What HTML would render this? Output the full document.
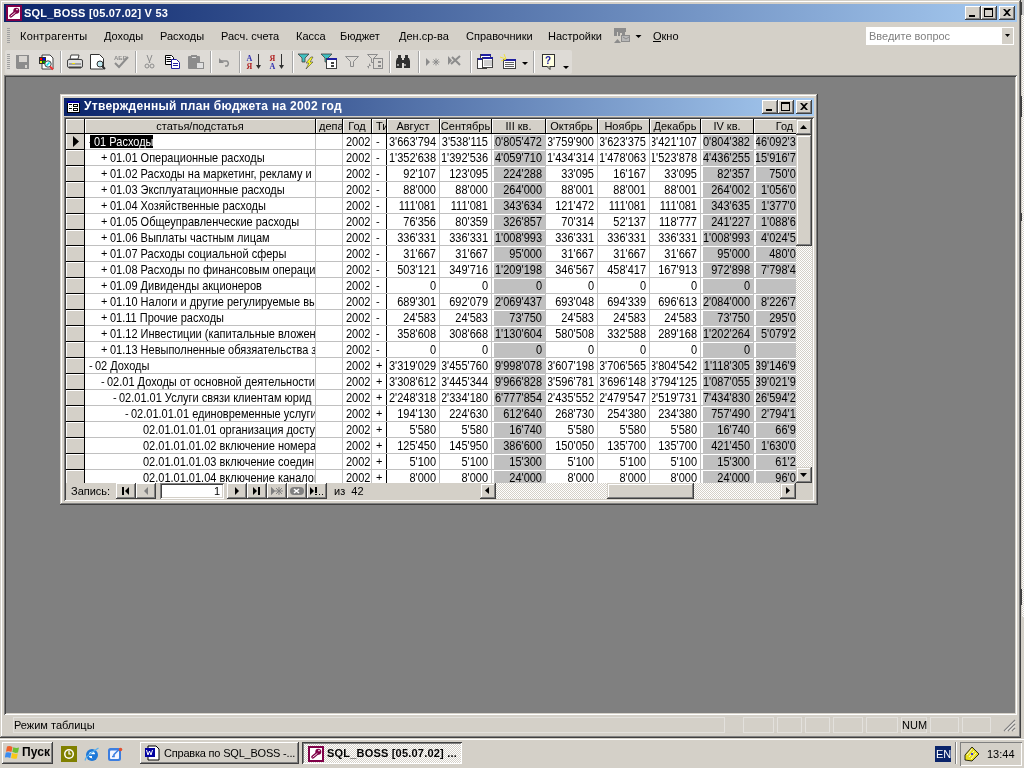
<!DOCTYPE html>
<html><head><meta charset="utf-8">
<style>
*{margin:0;padding:0;box-sizing:border-box}
html,body{width:1024px;height:768px;overflow:hidden;background:#D4D0C8;font-family:"Liberation Sans",sans-serif;font-size:11px;line-height:13px;color:#000}
.a{position:absolute}
.t{white-space:nowrap}
.chk{background-color:#fff;background-image:linear-gradient(45deg,#D4D0C8 25%,transparent 25%,transparent 75%,#D4D0C8 75%),linear-gradient(45deg,#D4D0C8 25%,transparent 25%,transparent 75%,#D4D0C8 75%);background-size:2px 2px;background-position:0 0,1px 1px}
.c{position:absolute;overflow:hidden;height:15px}
.c span{position:absolute;right:3px;top:1px;white-space:nowrap;transform:scaleY(1.12);transform-origin:0 2px}
.sy{transform:scaleY(1.12);transform-origin:0 2px}
.g{background:#C0C0C0}
</style></head><body>
<div class="a" style="left:0;top:0;width:1024px;height:768px;background:#D4D0C8;will-change:transform;overflow:hidden">

<div class="a" style="left:0px;top:0px;width:1021px;height:738px;box-shadow:inset -1px -1px #404040,inset 1px 1px #D4D0C8,inset -2px -2px #808080,inset 2px 2px #fff"></div>
<div class="a" style="left:4px;top:4px;width:1013px;height:18px;background:linear-gradient(to right,#0A246A,#A6CAF0)"></div>
<svg class="a" style="left:6px;top:5px" width="16" height="16" viewBox="0 0 16 16"><rect width="16" height="16" fill="#800048"/><rect x="2" y="2" width="12" height="12" fill="#fff"/><circle cx="10.3" cy="5.8" r="3" fill="#800048"/><path d="M9 7.5L4.8 11" stroke="#800048" stroke-width="3.2" stroke-linecap="round"/><path d="M4.6 11.2l4.8-3.8" stroke="#fff" stroke-width="0.9"/><circle cx="11" cy="4.6" r="0.8" fill="#fff"/></svg>
<div class="a t" style="left:24px;top:7px;color:#fff;font-weight:bold;letter-spacing:0.22px">SQL_BOSS [05.07.02] V 53</div>
<div class="a" style="left:965px;top:6px;width:16px;height:14px;background:#D4D0C8;box-shadow:inset -1px -1px #404040,inset 1px 1px #fff,inset -2px -2px #808080;"></div>
<div class="a" style="left:981px;top:6px;width:16px;height:14px;background:#D4D0C8;box-shadow:inset -1px -1px #404040,inset 1px 1px #fff,inset -2px -2px #808080;"></div>
<div class="a" style="left:999px;top:6px;width:16px;height:14px;background:#D4D0C8;box-shadow:inset -1px -1px #404040,inset 1px 1px #fff,inset -2px -2px #808080;"></div>
<div class="a" style="left:969px;top:15px;width:6px;height:2px;background:#000"></div>
<div class="a" style="left:984px;top:8px;width:9px;height:9px;border:1px solid #000;border-top-width:2px"></div>
<svg class="a" style="left:1003px;top:9px" width="8" height="7" viewBox="0 0 8 7"><path d="M0 0h2l2 2 2-2h2v0L5 3.5 8 7H6L4 5 2 7H0L3 3.5z" fill="#000"/></svg>
<div class="a" style="left:7px;top:28px;width:3px;height:1px;background:#A0A0A0"></div>
<div class="a" style="left:7px;top:30px;width:3px;height:1px;background:#A0A0A0"></div>
<div class="a" style="left:7px;top:32px;width:3px;height:1px;background:#A0A0A0"></div>
<div class="a" style="left:7px;top:34px;width:3px;height:1px;background:#A0A0A0"></div>
<div class="a" style="left:7px;top:36px;width:3px;height:1px;background:#A0A0A0"></div>
<div class="a" style="left:7px;top:38px;width:3px;height:1px;background:#A0A0A0"></div>
<div class="a" style="left:7px;top:40px;width:3px;height:1px;background:#A0A0A0"></div>
<div class="a" style="left:7px;top:42px;width:3px;height:1px;background:#A0A0A0"></div>
<div class="a t" style="left:20px;top:30px;"><span style="letter-spacing:0.25px">Контрагенты</span></div>
<div class="a t" style="left:104px;top:30px;">Доходы</div>
<div class="a t" style="left:160px;top:30px;">Расходы</div>
<div class="a t" style="left:221px;top:30px;">Расч. счета</div>
<div class="a t" style="left:296px;top:30px;">Касса</div>
<div class="a t" style="left:340px;top:30px;">Бюджет</div>
<div class="a t" style="left:399px;top:30px;">Ден.ср-ва</div>
<div class="a t" style="left:466px;top:30px;">Справочники</div>
<div class="a t" style="left:548px;top:30px;">Настройки</div>
<div class="a t" style="left:653px;top:30px;">Окно</div>
<svg class="a" style="left:614px;top:27px" width="28" height="18" viewBox="0 0 28 18"><path d="M0 1h12v4h-1v4H8V6H6v3H4V5H3v4H0z" fill="#8C8C8C"/><rect x="7.5" y="8.5" width="8" height="6" fill="#B8B8B8" stroke="#8C8C8C"/><path d="M9 10l3 2 3-2" stroke="#8C8C8C" fill="none"/><path d="M0 16l3.5-4 3.5 4z" fill="#8C8C8C"/><path d="M21.5 8h6l-3 3z" fill="#000"/></svg>
<div class="a" style="left:653px;top:41px;width:8px;height:1px;background:#000"></div>
<div class="a" style="left:866px;top:27px;width:148px;height:18px;background:#fff;border:1px solid #fff"></div>
<div class="a t" style="left:869px;top:30px;color:#808080">Введите вопрос</div>
<div class="a" style="left:1002px;top:28px;width:11px;height:16px;background:#D4D0C8"></div>
<svg class="a" style="left:1005px;top:34px" width="5" height="3"><path d="M0 0h5L2.5 3z" fill="#000"/></svg>
<div class="a" style="left:5px;top:50px;width:567px;height:24px;background:#DEDBD6;border-radius:2px"></div>
<div class="a" style="left:7px;top:54px;width:3px;height:1px;background:#A0A0A0"></div>
<div class="a" style="left:7px;top:56px;width:3px;height:1px;background:#A0A0A0"></div>
<div class="a" style="left:7px;top:58px;width:3px;height:1px;background:#A0A0A0"></div>
<div class="a" style="left:7px;top:60px;width:3px;height:1px;background:#A0A0A0"></div>
<div class="a" style="left:7px;top:62px;width:3px;height:1px;background:#A0A0A0"></div>
<div class="a" style="left:7px;top:64px;width:3px;height:1px;background:#A0A0A0"></div>
<div class="a" style="left:7px;top:66px;width:3px;height:1px;background:#A0A0A0"></div>
<div class="a" style="left:7px;top:68px;width:3px;height:1px;background:#A0A0A0"></div>
<div class="a" style="left:60px;top:51px;width:1px;height:22px;background:#A6A6A6"></div>
<div class="a" style="left:61px;top:51px;width:1px;height:22px;background:#fff"></div>
<div class="a" style="left:135px;top:51px;width:1px;height:22px;background:#A6A6A6"></div>
<div class="a" style="left:136px;top:51px;width:1px;height:22px;background:#fff"></div>
<div class="a" style="left:210px;top:51px;width:1px;height:22px;background:#A6A6A6"></div>
<div class="a" style="left:211px;top:51px;width:1px;height:22px;background:#fff"></div>
<div class="a" style="left:239px;top:51px;width:1px;height:22px;background:#A6A6A6"></div>
<div class="a" style="left:240px;top:51px;width:1px;height:22px;background:#fff"></div>
<div class="a" style="left:292px;top:51px;width:1px;height:22px;background:#A6A6A6"></div>
<div class="a" style="left:293px;top:51px;width:1px;height:22px;background:#fff"></div>
<div class="a" style="left:389px;top:51px;width:1px;height:22px;background:#A6A6A6"></div>
<div class="a" style="left:390px;top:51px;width:1px;height:22px;background:#fff"></div>
<div class="a" style="left:418px;top:51px;width:1px;height:22px;background:#A6A6A6"></div>
<div class="a" style="left:419px;top:51px;width:1px;height:22px;background:#fff"></div>
<div class="a" style="left:470px;top:51px;width:1px;height:22px;background:#A6A6A6"></div>
<div class="a" style="left:471px;top:51px;width:1px;height:22px;background:#fff"></div>
<div class="a" style="left:533px;top:51px;width:1px;height:22px;background:#A6A6A6"></div>
<div class="a" style="left:534px;top:51px;width:1px;height:22px;background:#fff"></div>
<svg class="a" style="left:0;top:50px" width="580" height="24" viewBox="0 50 580 24"><path d="M16 55h13v14H17l-1-1z" fill="#8C8C8C"/><rect x="19" y="56" width="8" height="6" fill="#D8D5D0"/><rect x="25" y="65" width="2" height="3" fill="#D8D5D0"/><path d="M42 55h8l3 3v11H42z" fill="#fff" stroke="#404040" stroke-width="1"/><rect x="39" y="57" width="7" height="7" fill="#303030"/><rect x="40" y="58" width="2" height="2" fill="#f00"/><rect x="43" y="58" width="2" height="2" fill="#00f"/><rect x="40" y="61" width="2" height="2" fill="#ee0"/><rect x="43" y="61" width="2" height="2" fill="#0a0"/><circle cx="48" cy="64" r="3.2" fill="#E0FFFF" stroke="#404040"/><path d="M46.5 65.5l3-3" stroke="#00E0F0" stroke-width="1.5"/><path d="M50 66.5l3 3" stroke="#f03030" stroke-width="2"/><path d="M71 55h8l-1 4h-8z" fill="#fff" stroke="#404040"/><rect x="67.5" y="59.5" width="15" height="8" rx="1.5" fill="#E0E0E0" stroke="#404040"/><rect x="69" y="63" width="12" height="2" fill="#A0A0A0"/><rect x="72" y="63" width="3" height="1" fill="#f0e000"/><rect x="69" y="66.5" width="12" height="2" fill="#404040"/><path d="M90.5 54.5h9l4 4v10.5h-13z" fill="#fff" stroke="#303030"/><circle cx="100" cy="64" r="3" fill="#C0E8F0" stroke="#303030"/><path d="M102 66l3 3" stroke="#303030" stroke-width="2"/><text x="114" y="60" font-size="6" font-family="Liberation Sans" font-weight="bold" fill="#8C8C8C">АБВ</text><path d="M115 63l4 4 9-10" stroke="#8C8C8C" stroke-width="2" fill="none"/><path d="M147 55l3 8M152 55l-3 8" stroke="#8C8C8C" stroke-width="1"/><circle cx="147" cy="66" r="2" fill="none" stroke="#8C8C8C"/><circle cx="152" cy="66" r="2" fill="none" stroke="#8C8C8C"/><path d="M165.5 55.5h6l2 2v7h-8z" fill="#fff" stroke="#000"/><path d="M166.5 57.5h4M166.5 59.5h5M166.5 61.5h5" stroke="#000"/><path d="M171.5 59.5h5l3 3v6h-8z" fill="#fff" stroke="#2020A0"/><path d="M173 63.5h5M173 65.5h5" stroke="#2020A0"/><rect x="188" y="56" width="12" height="13" rx="1" fill="#8C8C8C"/><rect x="191" y="55" width="6" height="3" fill="#8C8C8C"/><rect x="192" y="57" width="4" height="1" fill="#ddd"/><rect x="196.5" y="62.5" width="7" height="6" fill="#E0E0E0" stroke="#8C8C8C"/><path d="M221 61h6a3 3 0 0 1 0 5h-2" stroke="#8C8C8C" stroke-width="1.5" fill="none"/><path d="M219 58v5h5z" fill="#8C8C8C"/><text x="246.5" y="60.5" font-size="8" font-family="Liberation Serif" font-weight="bold" fill="#3030B0">A</text><text x="246.5" y="68.5" font-size="8" font-family="Liberation Serif" font-weight="bold" fill="#B02020">Я</text><path d="M258.5 54v13" stroke="#303030"/><path d="M256 65h5l-2.5 4z" fill="#303030"/><text x="269.5" y="60.5" font-size="8" font-family="Liberation Serif" font-weight="bold" fill="#B02020">Я</text><text x="269.5" y="68.5" font-size="8" font-family="Liberation Serif" font-weight="bold" fill="#3030B0">A</text><path d="M281.5 54v13" stroke="#303030"/><path d="M279 65h5l-2.5 4z" fill="#303030"/><path d="M298 54h11l-4 4v4h-3v-4z" fill="#40C0C0" stroke="#404040" stroke-width="0.8"/><path d="M311 57l-5 6h3l-3 6 7-7h-3l3-5z" fill="#FFFF20" stroke="#404040" stroke-width="0.6"/><path d="M321 54h11l-4 4v4h-3v-4z" fill="#40C0C0" stroke="#404040" stroke-width="0.8"/><rect x="326.5" y="58.5" width="10" height="10" fill="#fff" stroke="#404040"/><rect x="327" y="58" width="10" height="2" fill="#2020A0"/><rect x="331" y="62" width="3" height="2" fill="#404040"/><rect x="331" y="65" width="3" height="2" fill="#404040"/><path d="M345.5 56.5h13l-5 5v5h-3v-5z" fill="none" stroke="#8C8C8C"/><path d="M367.5 54.5h10l-4 4v4h-2v-4z" fill="none" stroke="#8C8C8C"/><rect x="373.5" y="58.5" width="9" height="10" fill="none" stroke="#8C8C8C"/><rect x="378" y="61" width="3" height="2" fill="#8C8C8C"/><rect x="378" y="65" width="3" height="2" fill="#8C8C8C"/><path d="M367 66h4l-2-3v6z" fill="#8C8C8C"/><path d="M397 58h5v10h-6v-7zM404 58h5l1 3v7h-6z" fill="#303030"/><rect x="398" y="55" width="3" height="3" fill="#303030"/><rect x="405" y="55" width="3" height="3" fill="#303030"/><rect x="402" y="60" width="2" height="3" fill="#303030"/><rect x="397.5" y="64" width="1" height="2" fill="#fff"/><rect x="404.5" y="64" width="1" height="2" fill="#fff"/><path d="M426 58v8l4-4z" fill="#8C8C8C"/><path d="M436 58.5v7M432.5 62h7M433.5 59.5l5 5M438.5 59.5l-5 5" stroke="#8C8C8C"/><path d="M448 56v9l4-4.5z" fill="#8C8C8C"/><path d="M451 64l9-8M452 57l8 8" stroke="#8C8C8C" stroke-width="2"/><rect x="480.5" y="54.5" width="10" height="9" fill="#fff" stroke="#404040"/><rect x="481" y="54" width="10" height="2" fill="#2020A0"/><rect x="477.5" y="58.5" width="9" height="10" fill="#fff" stroke="#404040"/><rect x="478" y="58" width="9" height="2" fill="#2020A0"/><rect x="482.5" y="57.5" width="10" height="10" fill="#fff" stroke="#404040"/><rect x="483" y="57" width="10" height="2" fill="#2020A0"/><path d="M484 61h8M484 63h8M484 65h8" stroke="#A0A0A0"/><rect x="503.5" y="59.5" width="12" height="9" fill="#fff" stroke="#404040"/><rect x="504" y="59" width="12" height="2" fill="#2020A0"/><path d="M505 62.5h9M505 64.5h9M505 66.5h9" stroke="#606060"/><path d="M500 57l6 2M504 54l2 5M501 61l5-2" stroke="#F0E040" stroke-width="1"/><path d="M522 62h6l-3 3z" fill="#000"/><rect x="542.5" y="54.5" width="12" height="12" fill="#FFFFE0" stroke="#303030"/><path d="M547 66.5l3 3v-3" fill="#FFFFE0" stroke="#303030"/><text x="545" y="64" font-size="10" font-weight="bold" font-family="Liberation Sans" fill="#2020A0">?</text><path d="M563 66h6l-3 3z" fill="#000"/></svg>
<div class="a" style="left:4px;top:75px;width:1013px;height:640px;background:#808080;box-shadow:inset 1px 1px #808080,inset -1px -1px #fff,inset 2px 2px #404040,inset -2px -2px #D4D0C8"></div>
<div class="a" style="left:60px;top:94px;width:758px;height:411px;background:#D4D0C8;box-shadow:inset -1px -1px #404040,inset 1px 1px #D4D0C8,inset -2px -2px #808080,inset 2px 2px #fff"></div>
<div class="a" style="left:64px;top:98px;width:750px;height:18px;background:linear-gradient(to right,#0A246A,#A6CAF0)"></div>
<svg class="a" style="left:67px;top:101px" width="13" height="12" viewBox="0 0 13 12" shape-rendering="crispEdges"><rect width="13" height="2" fill="#0000A0"/><rect y="2" width="13" height="10" fill="#000"/><rect x="1" y="2" width="11" height="9" fill="#fff"/><rect x="2" y="3" width="3" height="1" fill="#000"/><rect x="2" y="7" width="3" height="1" fill="#000"/><rect x="2" y="5" width="1" height="1" fill="#bbb"/><rect x="4" y="5" width="1" height="1" fill="#bbb"/><rect x="2" y="9" width="1" height="1" fill="#bbb"/><rect x="4" y="9" width="1" height="1" fill="#bbb"/><rect x="6" y="3" width="5" height="3" fill="#000"/><rect x="7" y="4" width="3" height="1" fill="#fff"/><rect x="6" y="7" width="5" height="3" fill="#000"/><rect x="7" y="8" width="3" height="1" fill="#fff"/></svg>
<div class="a t" style="left:84px;top:100px;color:#fff;font-weight:bold;font-size:12px;letter-spacing:0.28px">Утвержденный план бюджета на 2002 год</div>
<div class="a" style="left:762px;top:100px;width:16px;height:14px;background:#D4D0C8;box-shadow:inset -1px -1px #404040,inset 1px 1px #fff,inset -2px -2px #808080;"></div>
<div class="a" style="left:778px;top:100px;width:16px;height:14px;background:#D4D0C8;box-shadow:inset -1px -1px #404040,inset 1px 1px #fff,inset -2px -2px #808080;"></div>
<div class="a" style="left:796px;top:100px;width:16px;height:14px;background:#D4D0C8;box-shadow:inset -1px -1px #404040,inset 1px 1px #fff,inset -2px -2px #808080;"></div>
<div class="a" style="left:766px;top:109px;width:6px;height:2px;background:#000"></div>
<div class="a" style="left:781px;top:102px;width:9px;height:9px;border:1px solid #000;border-top-width:2px"></div>
<svg class="a" style="left:800px;top:103px" width="8" height="7" viewBox="0 0 8 7"><path d="M0 0h2l2 2 2-2h2v0L5 3.5 8 7H6L4 5 2 7H0L3 3.5z" fill="#000"/></svg>
<div class="a" style="left:64px;top:117px;width:750px;height:384px;box-shadow:inset 1px 1px #808080,inset -1px -1px #fff,inset 2px 2px #404040,inset -2px -2px #D4D0C8"></div>
<div class="a" style="left:66px;top:119px;width:730px;height:364px;overflow:hidden;background:#fff">
<div class="a" style="left:0;top:0;width:18px;height:364px;background:#D4D0C8"></div>
<div class="a" style="left:249px;top:15px;width:1px;height:349px;background:#C0C0C0"></div>
<div class="a" style="left:276px;top:15px;width:1px;height:349px;background:#C0C0C0"></div>
<div class="a" style="left:305px;top:15px;width:1px;height:349px;background:#C0C0C0"></div>
<div class="a" style="left:320px;top:15px;width:1px;height:349px;background:#000"></div>
<div class="a" style="left:373px;top:15px;width:1px;height:349px;background:#C0C0C0"></div>
<div class="a" style="left:425px;top:15px;width:1px;height:349px;background:#C0C0C0"></div>
<div class="a" style="left:479px;top:15px;width:1px;height:349px;background:#C0C0C0"></div>
<div class="a" style="left:531px;top:15px;width:1px;height:349px;background:#C0C0C0"></div>
<div class="a" style="left:583px;top:15px;width:1px;height:349px;background:#C0C0C0"></div>
<div class="a" style="left:634px;top:15px;width:1px;height:349px;background:#C0C0C0"></div>
<div class="a" style="left:687px;top:15px;width:1px;height:349px;background:#C0C0C0"></div>
<div class="a" style="left:18px;top:0;width:1px;height:364px;background:#000"></div>
<div class="a" style="left:19px;top:30px;width:730px;height:1px;background:#C0C0C0"></div>
<div class="a" style="left:0;top:30px;width:18px;height:1px;background:#000"></div>
<div class="a" style="left:0;top:31px;width:18px;height:1px;background:#fff"></div>
<div class="a" style="left:0;top:15px;width:1px;height:15px;background:#fff"></div>
<div class="a" style="left:19px;top:46px;width:730px;height:1px;background:#C0C0C0"></div>
<div class="a" style="left:0;top:46px;width:18px;height:1px;background:#000"></div>
<div class="a" style="left:0;top:47px;width:18px;height:1px;background:#fff"></div>
<div class="a" style="left:0;top:31px;width:1px;height:15px;background:#fff"></div>
<div class="a" style="left:19px;top:62px;width:730px;height:1px;background:#C0C0C0"></div>
<div class="a" style="left:0;top:62px;width:18px;height:1px;background:#000"></div>
<div class="a" style="left:0;top:63px;width:18px;height:1px;background:#fff"></div>
<div class="a" style="left:0;top:47px;width:1px;height:15px;background:#fff"></div>
<div class="a" style="left:19px;top:78px;width:730px;height:1px;background:#C0C0C0"></div>
<div class="a" style="left:0;top:78px;width:18px;height:1px;background:#000"></div>
<div class="a" style="left:0;top:79px;width:18px;height:1px;background:#fff"></div>
<div class="a" style="left:0;top:63px;width:1px;height:15px;background:#fff"></div>
<div class="a" style="left:19px;top:94px;width:730px;height:1px;background:#C0C0C0"></div>
<div class="a" style="left:0;top:94px;width:18px;height:1px;background:#000"></div>
<div class="a" style="left:0;top:95px;width:18px;height:1px;background:#fff"></div>
<div class="a" style="left:0;top:79px;width:1px;height:15px;background:#fff"></div>
<div class="a" style="left:19px;top:110px;width:730px;height:1px;background:#C0C0C0"></div>
<div class="a" style="left:0;top:110px;width:18px;height:1px;background:#000"></div>
<div class="a" style="left:0;top:111px;width:18px;height:1px;background:#fff"></div>
<div class="a" style="left:0;top:95px;width:1px;height:15px;background:#fff"></div>
<div class="a" style="left:19px;top:126px;width:730px;height:1px;background:#C0C0C0"></div>
<div class="a" style="left:0;top:126px;width:18px;height:1px;background:#000"></div>
<div class="a" style="left:0;top:127px;width:18px;height:1px;background:#fff"></div>
<div class="a" style="left:0;top:111px;width:1px;height:15px;background:#fff"></div>
<div class="a" style="left:19px;top:142px;width:730px;height:1px;background:#C0C0C0"></div>
<div class="a" style="left:0;top:142px;width:18px;height:1px;background:#000"></div>
<div class="a" style="left:0;top:143px;width:18px;height:1px;background:#fff"></div>
<div class="a" style="left:0;top:127px;width:1px;height:15px;background:#fff"></div>
<div class="a" style="left:19px;top:158px;width:730px;height:1px;background:#C0C0C0"></div>
<div class="a" style="left:0;top:158px;width:18px;height:1px;background:#000"></div>
<div class="a" style="left:0;top:159px;width:18px;height:1px;background:#fff"></div>
<div class="a" style="left:0;top:143px;width:1px;height:15px;background:#fff"></div>
<div class="a" style="left:19px;top:174px;width:730px;height:1px;background:#C0C0C0"></div>
<div class="a" style="left:0;top:174px;width:18px;height:1px;background:#000"></div>
<div class="a" style="left:0;top:175px;width:18px;height:1px;background:#fff"></div>
<div class="a" style="left:0;top:159px;width:1px;height:15px;background:#fff"></div>
<div class="a" style="left:19px;top:190px;width:730px;height:1px;background:#C0C0C0"></div>
<div class="a" style="left:0;top:190px;width:18px;height:1px;background:#000"></div>
<div class="a" style="left:0;top:191px;width:18px;height:1px;background:#fff"></div>
<div class="a" style="left:0;top:175px;width:1px;height:15px;background:#fff"></div>
<div class="a" style="left:19px;top:206px;width:730px;height:1px;background:#C0C0C0"></div>
<div class="a" style="left:0;top:206px;width:18px;height:1px;background:#000"></div>
<div class="a" style="left:0;top:207px;width:18px;height:1px;background:#fff"></div>
<div class="a" style="left:0;top:191px;width:1px;height:15px;background:#fff"></div>
<div class="a" style="left:19px;top:222px;width:730px;height:1px;background:#C0C0C0"></div>
<div class="a" style="left:0;top:222px;width:18px;height:1px;background:#000"></div>
<div class="a" style="left:0;top:223px;width:18px;height:1px;background:#fff"></div>
<div class="a" style="left:0;top:207px;width:1px;height:15px;background:#fff"></div>
<div class="a" style="left:19px;top:238px;width:730px;height:1px;background:#C0C0C0"></div>
<div class="a" style="left:0;top:238px;width:18px;height:1px;background:#000"></div>
<div class="a" style="left:0;top:239px;width:18px;height:1px;background:#fff"></div>
<div class="a" style="left:0;top:223px;width:1px;height:15px;background:#fff"></div>
<div class="a" style="left:19px;top:254px;width:730px;height:1px;background:#C0C0C0"></div>
<div class="a" style="left:0;top:254px;width:18px;height:1px;background:#000"></div>
<div class="a" style="left:0;top:255px;width:18px;height:1px;background:#fff"></div>
<div class="a" style="left:0;top:239px;width:1px;height:15px;background:#fff"></div>
<div class="a" style="left:19px;top:270px;width:730px;height:1px;background:#C0C0C0"></div>
<div class="a" style="left:0;top:270px;width:18px;height:1px;background:#000"></div>
<div class="a" style="left:0;top:271px;width:18px;height:1px;background:#fff"></div>
<div class="a" style="left:0;top:255px;width:1px;height:15px;background:#fff"></div>
<div class="a" style="left:19px;top:286px;width:730px;height:1px;background:#C0C0C0"></div>
<div class="a" style="left:0;top:286px;width:18px;height:1px;background:#000"></div>
<div class="a" style="left:0;top:287px;width:18px;height:1px;background:#fff"></div>
<div class="a" style="left:0;top:271px;width:1px;height:15px;background:#fff"></div>
<div class="a" style="left:19px;top:302px;width:730px;height:1px;background:#C0C0C0"></div>
<div class="a" style="left:0;top:302px;width:18px;height:1px;background:#000"></div>
<div class="a" style="left:0;top:303px;width:18px;height:1px;background:#fff"></div>
<div class="a" style="left:0;top:287px;width:1px;height:15px;background:#fff"></div>
<div class="a" style="left:19px;top:318px;width:730px;height:1px;background:#C0C0C0"></div>
<div class="a" style="left:0;top:318px;width:18px;height:1px;background:#000"></div>
<div class="a" style="left:0;top:319px;width:18px;height:1px;background:#fff"></div>
<div class="a" style="left:0;top:303px;width:1px;height:15px;background:#fff"></div>
<div class="a" style="left:19px;top:334px;width:730px;height:1px;background:#C0C0C0"></div>
<div class="a" style="left:0;top:334px;width:18px;height:1px;background:#000"></div>
<div class="a" style="left:0;top:335px;width:18px;height:1px;background:#fff"></div>
<div class="a" style="left:0;top:319px;width:1px;height:15px;background:#fff"></div>
<div class="a" style="left:19px;top:350px;width:730px;height:1px;background:#C0C0C0"></div>
<div class="a" style="left:0;top:350px;width:18px;height:1px;background:#000"></div>
<div class="a" style="left:0;top:351px;width:18px;height:1px;background:#fff"></div>
<div class="a" style="left:0;top:335px;width:1px;height:15px;background:#fff"></div>
<div class="a" style="left:19px;top:366px;width:730px;height:1px;background:#C0C0C0"></div>
<div class="a" style="left:0;top:366px;width:18px;height:1px;background:#000"></div>
<div class="a" style="left:0;top:367px;width:18px;height:1px;background:#fff"></div>
<div class="a" style="left:0;top:351px;width:1px;height:15px;background:#fff"></div>
<svg class="a" style="left:7px;top:17px" width="7" height="11"><path d="M0 0L6 5.5 0 11z" fill="#000"/></svg>
<div class="a" style="left:0;top:14px;width:730px;height:1px;background:#000"></div>
<div class="a" style="left:0px;top:0;width:18px;height:14px;background:#D4D0C8;box-shadow:inset 1px 1px #fff;overflow:hidden"></div>
<div class="a" style="left:19px;top:0;width:230px;height:14px;background:#D4D0C8;box-shadow:inset 1px 1px #fff;overflow:hidden"><div class="a t" style="left:0;width:230px;top:1px;text-align:center">статья/подстатья</div></div>
<div class="a" style="left:249px;top:0;width:1px;height:15px;background:#000"></div>
<div class="a" style="left:250px;top:0;width:26px;height:14px;background:#D4D0C8;box-shadow:inset 1px 1px #fff;overflow:hidden"><div class="a t" style="left:3px;top:1px">департамент</div></div>
<div class="a" style="left:276px;top:0;width:1px;height:15px;background:#000"></div>
<div class="a" style="left:277px;top:0;width:28px;height:14px;background:#D4D0C8;box-shadow:inset 1px 1px #fff;overflow:hidden"><div class="a t" style="left:0;width:28px;top:1px;text-align:center">Год</div></div>
<div class="a" style="left:305px;top:0;width:1px;height:15px;background:#000"></div>
<div class="a" style="left:306px;top:0;width:14px;height:14px;background:#D4D0C8;box-shadow:inset 1px 1px #fff;overflow:hidden"><div class="a t" style="left:4px;top:1px">Тип</div></div>
<div class="a" style="left:320px;top:0;width:1px;height:15px;background:#000"></div>
<div class="a" style="left:321px;top:0;width:52px;height:14px;background:#D4D0C8;box-shadow:inset 1px 1px #fff;overflow:hidden"><div class="a t" style="left:0;width:52px;top:1px;text-align:center">Август</div></div>
<div class="a" style="left:373px;top:0;width:1px;height:15px;background:#000"></div>
<div class="a" style="left:374px;top:0;width:51px;height:14px;background:#D4D0C8;box-shadow:inset 1px 1px #fff;overflow:hidden"><div class="a t" style="left:0;width:51px;top:1px;text-align:center">Сентябрь</div></div>
<div class="a" style="left:425px;top:0;width:1px;height:15px;background:#000"></div>
<div class="a" style="left:426px;top:0;width:53px;height:14px;background:#D4D0C8;box-shadow:inset 1px 1px #fff;overflow:hidden"><div class="a t" style="left:0;width:53px;top:1px;text-align:center">III кв.</div></div>
<div class="a" style="left:479px;top:0;width:1px;height:15px;background:#000"></div>
<div class="a" style="left:480px;top:0;width:51px;height:14px;background:#D4D0C8;box-shadow:inset 1px 1px #fff;overflow:hidden"><div class="a t" style="left:0;width:51px;top:1px;text-align:center">Октябрь</div></div>
<div class="a" style="left:531px;top:0;width:1px;height:15px;background:#000"></div>
<div class="a" style="left:532px;top:0;width:51px;height:14px;background:#D4D0C8;box-shadow:inset 1px 1px #fff;overflow:hidden"><div class="a t" style="left:0;width:51px;top:1px;text-align:center">Ноябрь</div></div>
<div class="a" style="left:583px;top:0;width:1px;height:15px;background:#000"></div>
<div class="a" style="left:584px;top:0;width:50px;height:14px;background:#D4D0C8;box-shadow:inset 1px 1px #fff;overflow:hidden"><div class="a t" style="left:0;width:50px;top:1px;text-align:center">Декабрь</div></div>
<div class="a" style="left:634px;top:0;width:1px;height:15px;background:#000"></div>
<div class="a" style="left:635px;top:0;width:52px;height:14px;background:#D4D0C8;box-shadow:inset 1px 1px #fff;overflow:hidden"><div class="a t" style="left:0;width:52px;top:1px;text-align:center">IV кв.</div></div>
<div class="a" style="left:687px;top:0;width:1px;height:15px;background:#000"></div>
<div class="a" style="left:688px;top:0;width:61px;height:14px;background:#D4D0C8;box-shadow:inset 1px 1px #fff;overflow:hidden"><div class="a t" style="left:0;width:61px;top:1px;text-align:center">Год</div></div>
<div class="a" style="left:749px;top:0;width:1px;height:15px;background:#000"></div>
<div class="a" style="left:24px;top:16px;width:63px;height:13px;background:#000"></div>
<div class="a" style="left:23px;top:23px;width:1px;height:1px;background:#808080"></div>
<div class="a t sy" style="left:28px;top:16px;color:#fff">01 Расходы</div>
<div class="a t sy" style="left:280px;top:16px">2002</div>
<div class="a t" style="left:310px;top:16px">-</div>
<div class="c" style="left:323px;top:15px;width:50px"><span>3'663'794</span></div>
<div class="c" style="left:376px;top:15px;width:49px"><span>3'538'115</span></div>
<div class="a g" style="left:428px;top:16px;width:51px;height:15px"></div>
<div class="c" style="left:428px;top:15px;width:51px"><span>10'805'472</span></div>
<div class="c" style="left:482px;top:15px;width:49px"><span>13'759'900</span></div>
<div class="c" style="left:534px;top:15px;width:49px"><span>13'623'375</span></div>
<div class="c" style="left:586px;top:15px;width:48px"><span>13'421'107</span></div>
<div class="a g" style="left:637px;top:16px;width:50px;height:15px"></div>
<div class="c" style="left:637px;top:15px;width:50px"><span>10'804'382</span></div>
<div class="a g" style="left:690px;top:16px;width:55px;height:15px"></div>
<div class="c" style="left:690px;top:15px;width:55px"><span>46'092'300</span></div>
<div class="a t" style="left:35px;top:32px">+</div>
<div class="a" style="left:19px;top:31px;width:230px;height:15px;overflow:hidden"><div class="a t sy" style="left:25px;top:1px">01.01 Операционные расходы</div></div>
<div class="a t sy" style="left:280px;top:32px">2002</div>
<div class="a t" style="left:310px;top:32px">-</div>
<div class="c" style="left:323px;top:31px;width:50px"><span>1'352'638</span></div>
<div class="c" style="left:376px;top:31px;width:49px"><span>1'392'536</span></div>
<div class="a g" style="left:428px;top:32px;width:51px;height:15px"></div>
<div class="c" style="left:428px;top:31px;width:51px"><span>4'059'710</span></div>
<div class="c" style="left:482px;top:31px;width:49px"><span>1'434'314</span></div>
<div class="c" style="left:534px;top:31px;width:49px"><span>1'478'063</span></div>
<div class="c" style="left:586px;top:31px;width:48px"><span>1'523'878</span></div>
<div class="a g" style="left:637px;top:32px;width:50px;height:15px"></div>
<div class="c" style="left:637px;top:31px;width:50px"><span>4'436'255</span></div>
<div class="a g" style="left:690px;top:32px;width:55px;height:15px"></div>
<div class="c" style="left:690px;top:31px;width:55px"><span>15'916'700</span></div>
<div class="a t" style="left:35px;top:48px">+</div>
<div class="a" style="left:19px;top:47px;width:230px;height:15px;overflow:hidden"><div class="a t sy" style="left:25px;top:1px">01.02 Расходы на маркетинг, рекламу и</div></div>
<div class="a t sy" style="left:280px;top:48px">2002</div>
<div class="a t" style="left:310px;top:48px">-</div>
<div class="c" style="left:323px;top:47px;width:50px"><span>92'107</span></div>
<div class="c" style="left:376px;top:47px;width:49px"><span>123'095</span></div>
<div class="a g" style="left:428px;top:48px;width:51px;height:15px"></div>
<div class="c" style="left:428px;top:47px;width:51px"><span>224'288</span></div>
<div class="c" style="left:482px;top:47px;width:49px"><span>33'095</span></div>
<div class="c" style="left:534px;top:47px;width:49px"><span>16'167</span></div>
<div class="c" style="left:586px;top:47px;width:48px"><span>33'095</span></div>
<div class="a g" style="left:637px;top:48px;width:50px;height:15px"></div>
<div class="c" style="left:637px;top:47px;width:50px"><span>82'357</span></div>
<div class="a g" style="left:690px;top:48px;width:55px;height:15px"></div>
<div class="c" style="left:690px;top:47px;width:55px"><span>750'000</span></div>
<div class="a t" style="left:35px;top:64px">+</div>
<div class="a" style="left:19px;top:63px;width:230px;height:15px;overflow:hidden"><div class="a t sy" style="left:25px;top:1px">01.03 Эксплуатационные расходы</div></div>
<div class="a t sy" style="left:280px;top:64px">2002</div>
<div class="a t" style="left:310px;top:64px">-</div>
<div class="c" style="left:323px;top:63px;width:50px"><span>88'000</span></div>
<div class="c" style="left:376px;top:63px;width:49px"><span>88'000</span></div>
<div class="a g" style="left:428px;top:64px;width:51px;height:15px"></div>
<div class="c" style="left:428px;top:63px;width:51px"><span>264'000</span></div>
<div class="c" style="left:482px;top:63px;width:49px"><span>88'001</span></div>
<div class="c" style="left:534px;top:63px;width:49px"><span>88'001</span></div>
<div class="c" style="left:586px;top:63px;width:48px"><span>88'001</span></div>
<div class="a g" style="left:637px;top:64px;width:50px;height:15px"></div>
<div class="c" style="left:637px;top:63px;width:50px"><span>264'002</span></div>
<div class="a g" style="left:690px;top:64px;width:55px;height:15px"></div>
<div class="c" style="left:690px;top:63px;width:55px"><span>1'056'000</span></div>
<div class="a t" style="left:35px;top:80px">+</div>
<div class="a" style="left:19px;top:79px;width:230px;height:15px;overflow:hidden"><div class="a t sy" style="left:25px;top:1px">01.04 Хозяйственные расходы</div></div>
<div class="a t sy" style="left:280px;top:80px">2002</div>
<div class="a t" style="left:310px;top:80px">-</div>
<div class="c" style="left:323px;top:79px;width:50px"><span>111'081</span></div>
<div class="c" style="left:376px;top:79px;width:49px"><span>111'081</span></div>
<div class="a g" style="left:428px;top:80px;width:51px;height:15px"></div>
<div class="c" style="left:428px;top:79px;width:51px"><span>343'634</span></div>
<div class="c" style="left:482px;top:79px;width:49px"><span>121'472</span></div>
<div class="c" style="left:534px;top:79px;width:49px"><span>111'081</span></div>
<div class="c" style="left:586px;top:79px;width:48px"><span>111'081</span></div>
<div class="a g" style="left:637px;top:80px;width:50px;height:15px"></div>
<div class="c" style="left:637px;top:79px;width:50px"><span>343'635</span></div>
<div class="a g" style="left:690px;top:80px;width:55px;height:15px"></div>
<div class="c" style="left:690px;top:79px;width:55px"><span>1'377'000</span></div>
<div class="a t" style="left:35px;top:96px">+</div>
<div class="a" style="left:19px;top:95px;width:230px;height:15px;overflow:hidden"><div class="a t sy" style="left:25px;top:1px">01.05 Общеуправленческие расходы</div></div>
<div class="a t sy" style="left:280px;top:96px">2002</div>
<div class="a t" style="left:310px;top:96px">-</div>
<div class="c" style="left:323px;top:95px;width:50px"><span>76'356</span></div>
<div class="c" style="left:376px;top:95px;width:49px"><span>80'359</span></div>
<div class="a g" style="left:428px;top:96px;width:51px;height:15px"></div>
<div class="c" style="left:428px;top:95px;width:51px"><span>326'857</span></div>
<div class="c" style="left:482px;top:95px;width:49px"><span>70'314</span></div>
<div class="c" style="left:534px;top:95px;width:49px"><span>52'137</span></div>
<div class="c" style="left:586px;top:95px;width:48px"><span>118'777</span></div>
<div class="a g" style="left:637px;top:96px;width:50px;height:15px"></div>
<div class="c" style="left:637px;top:95px;width:50px"><span>241'227</span></div>
<div class="a g" style="left:690px;top:96px;width:55px;height:15px"></div>
<div class="c" style="left:690px;top:95px;width:55px"><span>1'088'600</span></div>
<div class="a t" style="left:35px;top:112px">+</div>
<div class="a" style="left:19px;top:111px;width:230px;height:15px;overflow:hidden"><div class="a t sy" style="left:25px;top:1px">01.06 Выплаты частным лицам</div></div>
<div class="a t sy" style="left:280px;top:112px">2002</div>
<div class="a t" style="left:310px;top:112px">-</div>
<div class="c" style="left:323px;top:111px;width:50px"><span>336'331</span></div>
<div class="c" style="left:376px;top:111px;width:49px"><span>336'331</span></div>
<div class="a g" style="left:428px;top:112px;width:51px;height:15px"></div>
<div class="c" style="left:428px;top:111px;width:51px"><span>1'008'993</span></div>
<div class="c" style="left:482px;top:111px;width:49px"><span>336'331</span></div>
<div class="c" style="left:534px;top:111px;width:49px"><span>336'331</span></div>
<div class="c" style="left:586px;top:111px;width:48px"><span>336'331</span></div>
<div class="a g" style="left:637px;top:112px;width:50px;height:15px"></div>
<div class="c" style="left:637px;top:111px;width:50px"><span>1'008'993</span></div>
<div class="a g" style="left:690px;top:112px;width:55px;height:15px"></div>
<div class="c" style="left:690px;top:111px;width:55px"><span>4'024'500</span></div>
<div class="a t" style="left:35px;top:128px">+</div>
<div class="a" style="left:19px;top:127px;width:230px;height:15px;overflow:hidden"><div class="a t sy" style="left:25px;top:1px">01.07 Расходы социальной сферы</div></div>
<div class="a t sy" style="left:280px;top:128px">2002</div>
<div class="a t" style="left:310px;top:128px">-</div>
<div class="c" style="left:323px;top:127px;width:50px"><span>31'667</span></div>
<div class="c" style="left:376px;top:127px;width:49px"><span>31'667</span></div>
<div class="a g" style="left:428px;top:128px;width:51px;height:15px"></div>
<div class="c" style="left:428px;top:127px;width:51px"><span>95'000</span></div>
<div class="c" style="left:482px;top:127px;width:49px"><span>31'667</span></div>
<div class="c" style="left:534px;top:127px;width:49px"><span>31'667</span></div>
<div class="c" style="left:586px;top:127px;width:48px"><span>31'667</span></div>
<div class="a g" style="left:637px;top:128px;width:50px;height:15px"></div>
<div class="c" style="left:637px;top:127px;width:50px"><span>95'000</span></div>
<div class="a g" style="left:690px;top:128px;width:55px;height:15px"></div>
<div class="c" style="left:690px;top:127px;width:55px"><span>480'000</span></div>
<div class="a t" style="left:35px;top:144px">+</div>
<div class="a" style="left:19px;top:143px;width:230px;height:15px;overflow:hidden"><div class="a t sy" style="left:25px;top:1px">01.08 Расходы по финансовым операциям</div></div>
<div class="a t sy" style="left:280px;top:144px">2002</div>
<div class="a t" style="left:310px;top:144px">-</div>
<div class="c" style="left:323px;top:143px;width:50px"><span>503'121</span></div>
<div class="c" style="left:376px;top:143px;width:49px"><span>349'716</span></div>
<div class="a g" style="left:428px;top:144px;width:51px;height:15px"></div>
<div class="c" style="left:428px;top:143px;width:51px"><span>1'209'198</span></div>
<div class="c" style="left:482px;top:143px;width:49px"><span>346'567</span></div>
<div class="c" style="left:534px;top:143px;width:49px"><span>458'417</span></div>
<div class="c" style="left:586px;top:143px;width:48px"><span>167'913</span></div>
<div class="a g" style="left:637px;top:144px;width:50px;height:15px"></div>
<div class="c" style="left:637px;top:143px;width:50px"><span>972'898</span></div>
<div class="a g" style="left:690px;top:144px;width:55px;height:15px"></div>
<div class="c" style="left:690px;top:143px;width:55px"><span>7'798'400</span></div>
<div class="a t" style="left:35px;top:160px">+</div>
<div class="a" style="left:19px;top:159px;width:230px;height:15px;overflow:hidden"><div class="a t sy" style="left:25px;top:1px">01.09 Дивиденды акционеров</div></div>
<div class="a t sy" style="left:280px;top:160px">2002</div>
<div class="a t" style="left:310px;top:160px">-</div>
<div class="c" style="left:323px;top:159px;width:50px"><span>0</span></div>
<div class="c" style="left:376px;top:159px;width:49px"><span>0</span></div>
<div class="a g" style="left:428px;top:160px;width:51px;height:15px"></div>
<div class="c" style="left:428px;top:159px;width:51px"><span>0</span></div>
<div class="c" style="left:482px;top:159px;width:49px"><span>0</span></div>
<div class="c" style="left:534px;top:159px;width:49px"><span>0</span></div>
<div class="c" style="left:586px;top:159px;width:48px"><span>0</span></div>
<div class="a g" style="left:637px;top:160px;width:50px;height:15px"></div>
<div class="c" style="left:637px;top:159px;width:50px"><span>0</span></div>
<div class="a g" style="left:690px;top:160px;width:55px;height:15px"></div>
<div class="a t" style="left:35px;top:176px">+</div>
<div class="a" style="left:19px;top:175px;width:230px;height:15px;overflow:hidden"><div class="a t sy" style="left:25px;top:1px">01.10 Налоги и другие регулируемые выплаты</div></div>
<div class="a t sy" style="left:280px;top:176px">2002</div>
<div class="a t" style="left:310px;top:176px">-</div>
<div class="c" style="left:323px;top:175px;width:50px"><span>689'301</span></div>
<div class="c" style="left:376px;top:175px;width:49px"><span>692'079</span></div>
<div class="a g" style="left:428px;top:176px;width:51px;height:15px"></div>
<div class="c" style="left:428px;top:175px;width:51px"><span>2'069'437</span></div>
<div class="c" style="left:482px;top:175px;width:49px"><span>693'048</span></div>
<div class="c" style="left:534px;top:175px;width:49px"><span>694'339</span></div>
<div class="c" style="left:586px;top:175px;width:48px"><span>696'613</span></div>
<div class="a g" style="left:637px;top:176px;width:50px;height:15px"></div>
<div class="c" style="left:637px;top:175px;width:50px"><span>2'084'000</span></div>
<div class="a g" style="left:690px;top:176px;width:55px;height:15px"></div>
<div class="c" style="left:690px;top:175px;width:55px"><span>8'226'700</span></div>
<div class="a t" style="left:35px;top:192px">+</div>
<div class="a" style="left:19px;top:191px;width:230px;height:15px;overflow:hidden"><div class="a t sy" style="left:25px;top:1px">01.11 Прочие расходы</div></div>
<div class="a t sy" style="left:280px;top:192px">2002</div>
<div class="a t" style="left:310px;top:192px">-</div>
<div class="c" style="left:323px;top:191px;width:50px"><span>24'583</span></div>
<div class="c" style="left:376px;top:191px;width:49px"><span>24'583</span></div>
<div class="a g" style="left:428px;top:192px;width:51px;height:15px"></div>
<div class="c" style="left:428px;top:191px;width:51px"><span>73'750</span></div>
<div class="c" style="left:482px;top:191px;width:49px"><span>24'583</span></div>
<div class="c" style="left:534px;top:191px;width:49px"><span>24'583</span></div>
<div class="c" style="left:586px;top:191px;width:48px"><span>24'583</span></div>
<div class="a g" style="left:637px;top:192px;width:50px;height:15px"></div>
<div class="c" style="left:637px;top:191px;width:50px"><span>73'750</span></div>
<div class="a g" style="left:690px;top:192px;width:55px;height:15px"></div>
<div class="c" style="left:690px;top:191px;width:55px"><span>295'000</span></div>
<div class="a t" style="left:35px;top:208px">+</div>
<div class="a" style="left:19px;top:207px;width:230px;height:15px;overflow:hidden"><div class="a t sy" style="left:25px;top:1px">01.12 Инвестиции (капитальные вложения)</div></div>
<div class="a t sy" style="left:280px;top:208px">2002</div>
<div class="a t" style="left:310px;top:208px">-</div>
<div class="c" style="left:323px;top:207px;width:50px"><span>358'608</span></div>
<div class="c" style="left:376px;top:207px;width:49px"><span>308'668</span></div>
<div class="a g" style="left:428px;top:208px;width:51px;height:15px"></div>
<div class="c" style="left:428px;top:207px;width:51px"><span>1'130'604</span></div>
<div class="c" style="left:482px;top:207px;width:49px"><span>580'508</span></div>
<div class="c" style="left:534px;top:207px;width:49px"><span>332'588</span></div>
<div class="c" style="left:586px;top:207px;width:48px"><span>289'168</span></div>
<div class="a g" style="left:637px;top:208px;width:50px;height:15px"></div>
<div class="c" style="left:637px;top:207px;width:50px"><span>1'202'264</span></div>
<div class="a g" style="left:690px;top:208px;width:55px;height:15px"></div>
<div class="c" style="left:690px;top:207px;width:55px"><span>5'079'200</span></div>
<div class="a t" style="left:35px;top:224px">+</div>
<div class="a" style="left:19px;top:223px;width:230px;height:15px;overflow:hidden"><div class="a t sy" style="left:25px;top:1px">01.13 Невыполненные обязяательства за</div></div>
<div class="a t sy" style="left:280px;top:224px">2002</div>
<div class="a t" style="left:310px;top:224px">-</div>
<div class="c" style="left:323px;top:223px;width:50px"><span>0</span></div>
<div class="c" style="left:376px;top:223px;width:49px"><span>0</span></div>
<div class="a g" style="left:428px;top:224px;width:51px;height:15px"></div>
<div class="c" style="left:428px;top:223px;width:51px"><span>0</span></div>
<div class="c" style="left:482px;top:223px;width:49px"><span>0</span></div>
<div class="c" style="left:534px;top:223px;width:49px"><span>0</span></div>
<div class="c" style="left:586px;top:223px;width:48px"><span>0</span></div>
<div class="a g" style="left:637px;top:224px;width:50px;height:15px"></div>
<div class="c" style="left:637px;top:223px;width:50px"><span>0</span></div>
<div class="a g" style="left:690px;top:224px;width:55px;height:15px"></div>
<div class="a t" style="left:23px;top:240px">-</div>
<div class="a" style="left:19px;top:239px;width:230px;height:15px;overflow:hidden"><div class="a t sy" style="left:10px;top:1px">02 Доходы</div></div>
<div class="a t sy" style="left:280px;top:240px">2002</div>
<div class="a t" style="left:310px;top:240px">+</div>
<div class="c" style="left:323px;top:239px;width:50px"><span>3'319'029</span></div>
<div class="c" style="left:376px;top:239px;width:49px"><span>3'455'760</span></div>
<div class="a g" style="left:428px;top:240px;width:51px;height:15px"></div>
<div class="c" style="left:428px;top:239px;width:51px"><span>9'998'078</span></div>
<div class="c" style="left:482px;top:239px;width:49px"><span>3'607'198</span></div>
<div class="c" style="left:534px;top:239px;width:49px"><span>3'706'565</span></div>
<div class="c" style="left:586px;top:239px;width:48px"><span>3'804'542</span></div>
<div class="a g" style="left:637px;top:240px;width:50px;height:15px"></div>
<div class="c" style="left:637px;top:239px;width:50px"><span>1'118'305</span></div>
<div class="a g" style="left:690px;top:240px;width:55px;height:15px"></div>
<div class="c" style="left:690px;top:239px;width:55px"><span>39'146'900</span></div>
<div class="a t" style="left:35px;top:256px">-</div>
<div class="a" style="left:19px;top:255px;width:230px;height:15px;overflow:hidden"><div class="a t sy" style="left:22px;top:1px">02.01 Доходы от основной деятельности</div></div>
<div class="a t sy" style="left:280px;top:256px">2002</div>
<div class="a t" style="left:310px;top:256px">+</div>
<div class="c" style="left:323px;top:255px;width:50px"><span>3'308'612</span></div>
<div class="c" style="left:376px;top:255px;width:49px"><span>3'445'344</span></div>
<div class="a g" style="left:428px;top:256px;width:51px;height:15px"></div>
<div class="c" style="left:428px;top:255px;width:51px"><span>9'966'828</span></div>
<div class="c" style="left:482px;top:255px;width:49px"><span>3'596'781</span></div>
<div class="c" style="left:534px;top:255px;width:49px"><span>3'696'148</span></div>
<div class="c" style="left:586px;top:255px;width:48px"><span>3'794'125</span></div>
<div class="a g" style="left:637px;top:256px;width:50px;height:15px"></div>
<div class="c" style="left:637px;top:255px;width:50px"><span>1'087'055</span></div>
<div class="a g" style="left:690px;top:256px;width:55px;height:15px"></div>
<div class="c" style="left:690px;top:255px;width:55px"><span>39'021'900</span></div>
<div class="a t" style="left:47px;top:272px">-</div>
<div class="a" style="left:19px;top:271px;width:230px;height:15px;overflow:hidden"><div class="a t sy" style="left:34px;top:1px">02.01.01 Услуги связи клиентам юрид</div></div>
<div class="a t sy" style="left:280px;top:272px">2002</div>
<div class="a t" style="left:310px;top:272px">+</div>
<div class="c" style="left:323px;top:271px;width:50px"><span>2'248'318</span></div>
<div class="c" style="left:376px;top:271px;width:49px"><span>2'334'180</span></div>
<div class="a g" style="left:428px;top:272px;width:51px;height:15px"></div>
<div class="c" style="left:428px;top:271px;width:51px"><span>6'777'854</span></div>
<div class="c" style="left:482px;top:271px;width:49px"><span>2'435'552</span></div>
<div class="c" style="left:534px;top:271px;width:49px"><span>2'479'547</span></div>
<div class="c" style="left:586px;top:271px;width:48px"><span>2'519'731</span></div>
<div class="a g" style="left:637px;top:272px;width:50px;height:15px"></div>
<div class="c" style="left:637px;top:271px;width:50px"><span>7'434'830</span></div>
<div class="a g" style="left:690px;top:272px;width:55px;height:15px"></div>
<div class="c" style="left:690px;top:271px;width:55px"><span>26'594'200</span></div>
<div class="a t" style="left:59px;top:288px">-</div>
<div class="a" style="left:19px;top:287px;width:230px;height:15px;overflow:hidden"><div class="a t sy" style="left:46px;top:1px">02.01.01.01 единовременные услуги</div></div>
<div class="a t sy" style="left:280px;top:288px">2002</div>
<div class="a t" style="left:310px;top:288px">+</div>
<div class="c" style="left:323px;top:287px;width:50px"><span>194'130</span></div>
<div class="c" style="left:376px;top:287px;width:49px"><span>224'630</span></div>
<div class="a g" style="left:428px;top:288px;width:51px;height:15px"></div>
<div class="c" style="left:428px;top:287px;width:51px"><span>612'640</span></div>
<div class="c" style="left:482px;top:287px;width:49px"><span>268'730</span></div>
<div class="c" style="left:534px;top:287px;width:49px"><span>254'380</span></div>
<div class="c" style="left:586px;top:287px;width:48px"><span>234'380</span></div>
<div class="a g" style="left:637px;top:288px;width:50px;height:15px"></div>
<div class="c" style="left:637px;top:287px;width:50px"><span>757'490</span></div>
<div class="a g" style="left:690px;top:288px;width:55px;height:15px"></div>
<div class="c" style="left:690px;top:287px;width:55px"><span>2'794'100</span></div>
<div class="a" style="left:19px;top:303px;width:230px;height:15px;overflow:hidden"><div class="a t sy" style="left:58px;top:1px">02.01.01.01.01 организация доступа</div></div>
<div class="a t sy" style="left:280px;top:304px">2002</div>
<div class="a t" style="left:310px;top:304px">+</div>
<div class="c" style="left:323px;top:303px;width:50px"><span>5'580</span></div>
<div class="c" style="left:376px;top:303px;width:49px"><span>5'580</span></div>
<div class="a g" style="left:428px;top:304px;width:51px;height:15px"></div>
<div class="c" style="left:428px;top:303px;width:51px"><span>16'740</span></div>
<div class="c" style="left:482px;top:303px;width:49px"><span>5'580</span></div>
<div class="c" style="left:534px;top:303px;width:49px"><span>5'580</span></div>
<div class="c" style="left:586px;top:303px;width:48px"><span>5'580</span></div>
<div class="a g" style="left:637px;top:304px;width:50px;height:15px"></div>
<div class="c" style="left:637px;top:303px;width:50px"><span>16'740</span></div>
<div class="a g" style="left:690px;top:304px;width:55px;height:15px"></div>
<div class="c" style="left:690px;top:303px;width:55px"><span>66'900</span></div>
<div class="a" style="left:19px;top:319px;width:230px;height:15px;overflow:hidden"><div class="a t sy" style="left:58px;top:1px">02.01.01.01.02 включение номера</div></div>
<div class="a t sy" style="left:280px;top:320px">2002</div>
<div class="a t" style="left:310px;top:320px">+</div>
<div class="c" style="left:323px;top:319px;width:50px"><span>125'450</span></div>
<div class="c" style="left:376px;top:319px;width:49px"><span>145'950</span></div>
<div class="a g" style="left:428px;top:320px;width:51px;height:15px"></div>
<div class="c" style="left:428px;top:319px;width:51px"><span>386'600</span></div>
<div class="c" style="left:482px;top:319px;width:49px"><span>150'050</span></div>
<div class="c" style="left:534px;top:319px;width:49px"><span>135'700</span></div>
<div class="c" style="left:586px;top:319px;width:48px"><span>135'700</span></div>
<div class="a g" style="left:637px;top:320px;width:50px;height:15px"></div>
<div class="c" style="left:637px;top:319px;width:50px"><span>421'450</span></div>
<div class="a g" style="left:690px;top:320px;width:55px;height:15px"></div>
<div class="c" style="left:690px;top:319px;width:55px"><span>1'630'000</span></div>
<div class="a" style="left:19px;top:335px;width:230px;height:15px;overflow:hidden"><div class="a t sy" style="left:58px;top:1px">02.01.01.01.03 включение соединительных</div></div>
<div class="a t sy" style="left:280px;top:336px">2002</div>
<div class="a t" style="left:310px;top:336px">+</div>
<div class="c" style="left:323px;top:335px;width:50px"><span>5'100</span></div>
<div class="c" style="left:376px;top:335px;width:49px"><span>5'100</span></div>
<div class="a g" style="left:428px;top:336px;width:51px;height:15px"></div>
<div class="c" style="left:428px;top:335px;width:51px"><span>15'300</span></div>
<div class="c" style="left:482px;top:335px;width:49px"><span>5'100</span></div>
<div class="c" style="left:534px;top:335px;width:49px"><span>5'100</span></div>
<div class="c" style="left:586px;top:335px;width:48px"><span>5'100</span></div>
<div class="a g" style="left:637px;top:336px;width:50px;height:15px"></div>
<div class="c" style="left:637px;top:335px;width:50px"><span>15'300</span></div>
<div class="a g" style="left:690px;top:336px;width:55px;height:15px"></div>
<div class="c" style="left:690px;top:335px;width:55px"><span>61'200</span></div>
<div class="a" style="left:19px;top:351px;width:230px;height:15px;overflow:hidden"><div class="a t sy" style="left:58px;top:1px">02.01.01.01.04 включение каналов</div></div>
<div class="a t sy" style="left:280px;top:352px">2002</div>
<div class="a t" style="left:310px;top:352px">+</div>
<div class="c" style="left:323px;top:351px;width:50px"><span>8'000</span></div>
<div class="c" style="left:376px;top:351px;width:49px"><span>8'000</span></div>
<div class="a g" style="left:428px;top:352px;width:51px;height:15px"></div>
<div class="c" style="left:428px;top:351px;width:51px"><span>24'000</span></div>
<div class="c" style="left:482px;top:351px;width:49px"><span>8'000</span></div>
<div class="c" style="left:534px;top:351px;width:49px"><span>8'000</span></div>
<div class="c" style="left:586px;top:351px;width:48px"><span>8'000</span></div>
<div class="a g" style="left:637px;top:352px;width:50px;height:15px"></div>
<div class="c" style="left:637px;top:351px;width:50px"><span>24'000</span></div>
<div class="a g" style="left:690px;top:352px;width:55px;height:15px"></div>
<div class="c" style="left:690px;top:351px;width:55px"><span>96'000</span></div>
</div>
<div class="a chk" style="left:796px;top:135px;width:16px;height:333px;"></div>
<div class="a" style="left:796px;top:119px;width:16px;height:16px;background:#D4D0C8;box-shadow:inset -1px -1px #404040,inset 1px 1px #D4D0C8,inset -2px -2px #808080,inset 2px 2px #fff;"></div>
<svg class="a" style="left:800px;top:125px" width="7" height="4"><path d="M3.5 0L7 4H0z" fill="#000"/></svg>
<div class="a" style="left:796px;top:135px;width:16px;height:111px;background:#D4D0C8;box-shadow:inset -1px -1px #404040,inset 1px 1px #D4D0C8,inset -2px -2px #808080,inset 2px 2px #fff;"></div>
<div class="a" style="left:796px;top:467px;width:16px;height:16px;background:#D4D0C8;box-shadow:inset -1px -1px #404040,inset 1px 1px #D4D0C8,inset -2px -2px #808080,inset 2px 2px #fff;"></div>
<svg class="a" style="left:800px;top:473px" width="7" height="4"><path d="M0 0h7L3.5 4z" fill="#000"/></svg>
<div class="a" style="left:796px;top:483px;width:16px;height:16px;background:#D4D0C8"></div>
<div class="a chk" style="left:496px;top:483px;width:284px;height:16px;"></div>
<div class="a" style="left:480px;top:483px;width:16px;height:16px;background:#D4D0C8;box-shadow:inset -1px -1px #404040,inset 1px 1px #D4D0C8,inset -2px -2px #808080,inset 2px 2px #fff;"></div>
<svg class="a" style="left:485px;top:487px" width="4" height="7"><path d="M4 0v7L0 3.5z" fill="#000"/></svg>
<div class="a" style="left:607px;top:483px;width:87px;height:16px;background:#D4D0C8;box-shadow:inset -1px -1px #404040,inset 1px 1px #D4D0C8,inset -2px -2px #808080,inset 2px 2px #fff;"></div>
<div class="a" style="left:780px;top:483px;width:16px;height:16px;background:#D4D0C8;box-shadow:inset -1px -1px #404040,inset 1px 1px #D4D0C8,inset -2px -2px #808080,inset 2px 2px #fff;"></div>
<svg class="a" style="left:786px;top:487px" width="4" height="7"><path d="M0 0v7l4-3.5z" fill="#000"/></svg>
<div class="a" style="left:66px;top:483px;width:414px;height:16px;background:#D4D0C8"></div>
<div class="a t" style="left:71px;top:485px;">Запись:</div>
<div class="a" style="left:116px;top:483px;width:20px;height:16px;background:#D4D0C8;box-shadow:inset -1px -1px #404040,inset 1px 1px #fff,inset -2px -2px #808080;"></div>
<svg class="a" style="left:116px;top:483px" width="20" height="16" viewBox="0 0 20 16"><rect x="6" y="4" width="2" height="8" fill="#000"/><path d="M13 4v8L9 8z" fill="#000"/></svg>
<div class="a" style="left:136px;top:483px;width:20px;height:16px;background:#D4D0C8;box-shadow:inset -1px -1px #404040,inset 1px 1px #fff,inset -2px -2px #808080;"></div>
<svg class="a" style="left:136px;top:483px" width="20" height="16" viewBox="0 0 20 16"><path d="M12 4v8L8 8z" fill="#808080"/></svg>
<div class="a" style="left:227px;top:483px;width:20px;height:16px;background:#D4D0C8;box-shadow:inset -1px -1px #404040,inset 1px 1px #fff,inset -2px -2px #808080;"></div>
<svg class="a" style="left:227px;top:483px" width="20" height="16" viewBox="0 0 20 16"><path d="M8 4v8l4-4z" fill="#000"/></svg>
<div class="a" style="left:247px;top:483px;width:20px;height:16px;background:#D4D0C8;box-shadow:inset -1px -1px #404040,inset 1px 1px #fff,inset -2px -2px #808080;"></div>
<svg class="a" style="left:247px;top:483px" width="20" height="16" viewBox="0 0 20 16"><path d="M6 4v8l4-4z" fill="#000"/><rect x="11" y="4" width="2" height="8" fill="#000"/></svg>
<div class="a" style="left:267px;top:483px;width:20px;height:16px;background:#D4D0C8;box-shadow:inset -1px -1px #404040,inset 1px 1px #fff,inset -2px -2px #808080;"></div>
<svg class="a" style="left:267px;top:483px" width="20" height="16" viewBox="0 0 20 16"><path d="M4 4v8l4-4z" fill="#808080"/><path d="M12 4v8M8 8h8M9 5l6 6M15 5l-6 6" stroke="#808080" stroke-width="1"/><path d="M4 4v8l4-4z" fill="#808080"/></svg>
<div class="a" style="left:287px;top:483px;width:20px;height:16px;background:#D4D0C8;box-shadow:inset -1px -1px #404040,inset 1px 1px #fff,inset -2px -2px #808080;"></div>
<svg class="a" style="left:287px;top:483px" width="20" height="16" viewBox="0 0 20 16"><rect x="3" y="4" width="14" height="8" rx="4" fill="#808080"/><path d="M7 6l5 4M12 6l-5 4" stroke="#fff" stroke-width="1.6"/></svg>
<div class="a" style="left:307px;top:483px;width:20px;height:16px;background:#D4D0C8;box-shadow:inset -1px -1px #404040,inset 1px 1px #fff,inset -2px -2px #808080;"></div>
<svg class="a" style="left:307px;top:483px" width="20" height="16" viewBox="0 0 20 16"><path d="M3 4v8l4-4z" fill="#000"/><rect x="8" y="4" width="2" height="6" fill="#000"/><rect x="8" y="11" width="2" height="1" fill="#000"/><rect x="12" y="11" width="1" height="1" fill="#000"/><rect x="15" y="11" width="1" height="1" fill="#000"/></svg>
<div class="a" style="left:160px;top:483px;width:64px;height:16px;background:#fff;box-shadow:inset 1px 1px #808080,inset -1px -1px #fff,inset 2px 2px #404040,inset -2px -2px #D4D0C8"></div>
<div class="a t" style="left:160px;top:485px;width:60px;text-align:right">1</div>
<div class="a t" style="left:334px;top:485px;">из&nbsp;&nbsp;42</div>
<div class="a" style="left:13px;top:717px;width:712px;height:16px;border:1px solid #E3E1DD"></div>
<div class="a t" style="left:14px;top:719px;">Режим таблицы</div>
<div class="a" style="left:743px;top:717px;width:31px;height:16px;border:1px solid #E3E1DD"></div>
<div class="a" style="left:777px;top:717px;width:25px;height:16px;border:1px solid #E3E1DD"></div>
<div class="a" style="left:805px;top:717px;width:25px;height:16px;border:1px solid #E3E1DD"></div>
<div class="a" style="left:833px;top:717px;width:30px;height:16px;border:1px solid #E3E1DD"></div>
<div class="a" style="left:866px;top:717px;width:32px;height:16px;border:1px solid #E3E1DD"></div>
<div class="a" style="left:901px;top:717px;width:26px;height:16px;border:1px solid #E3E1DD"></div>
<div class="a" style="left:930px;top:717px;width:29px;height:16px;border:1px solid #E3E1DD"></div>
<div class="a" style="left:962px;top:717px;width:29px;height:16px;border:1px solid #E3E1DD"></div>
<div class="a t" style="left:902px;top:719px;">NUM</div>
<svg class="a" style="left:1003px;top:719px" width="13" height="13" viewBox="0 0 13 13"><path d="M12 1L1 12M12 5L5 12M12 9L9 12" stroke="#808080" stroke-width="1.2"/><path d="M12 2.5L2.5 12M12 6.5L6.5 12M12 10.5L10.5 12" stroke="#fff" stroke-width="0.8"/></svg>
<div class="a" style="left:0px;top:738px;width:1024px;height:30px;background:#D4D0C8;box-shadow:inset 0 1px #D4D0C8,inset 0 2px #fff"></div>
<div class="a" style="left:2px;top:742px;width:51px;height:22px;background:#D4D0C8;box-shadow:inset -1px -1px #404040,inset 1px 1px #fff,inset -2px -2px #808080;"></div>
<svg class="a" style="left:5px;top:745px" width="15" height="14" viewBox="0 0 15 14"><path d="M2 1.5q2.5-1 5.5 0.5l-1 5q-3-1.3-5.5-0.3z" fill="#F0602A"/><path d="M8.3 2.2q3 1.3 5.7 0.3l-1 5q-2.6 1-5.7-0.4z" fill="#6CC030"/><path d="M0.8 7.6q2.5-1 5.5 0.3l-1 5q-3-1.3-5.5-0.3z" fill="#3A8CF0"/><path d="M7.1 8.1q3 1.3 5.7 0.3l-1 5q-2.6 1-5.7-0.4z" fill="#F8C818"/></svg>
<div class="a t" style="left:22px;top:746px;font-weight:bold;font-size:12px;letter-spacing:0.1px">Пуск</div>
<svg class="a" style="left:61px;top:746px" width="16" height="16" viewBox="0 0 16 16"><rect width="16" height="16" fill="#808000"/><circle cx="8" cy="8" r="5" fill="#fff"/><circle cx="8" cy="8" r="3.5" fill="#808000"/><path d="M8 5v3h2" stroke="#fff" stroke-width="1.2" fill="none"/></svg>
<svg class="a" style="left:84px;top:746px" width="16" height="16" viewBox="0 0 16 16"><circle cx="8" cy="9" r="6" fill="#1E78D8"/><circle cx="8" cy="9" r="3.2" fill="#fff"/><rect x="4" y="8.2" width="8" height="1.8" fill="#1E78D8"/><rect x="8" y="10" width="5" height="2" fill="#1E78D8"/><path d="M1.5 14.5q-2-3 13-12.5" stroke="#58B0F0" stroke-width="1.3" fill="none"/></svg>
<svg class="a" style="left:107px;top:746px" width="16" height="16" viewBox="0 0 16 16"><rect x="1" y="2" width="13" height="13" rx="2.5" fill="#3C7EE0"/><rect x="3" y="4.5" width="9" height="8.5" rx="1" fill="#F4F4FF"/><path d="M5 10.5h2v-2l5-5" stroke="#3C7EE0" stroke-width="1.6" fill="none"/><circle cx="13.5" cy="3.5" r="1.8" fill="#E05030"/></svg>
<div class="a" style="left:140px;top:742px;width:159px;height:22px;background:#D4D0C8;box-shadow:inset -1px -1px #404040,inset 1px 1px #fff,inset -2px -2px #808080;"></div>
<svg class="a" style="left:144px;top:745px" width="16" height="16" viewBox="0 0 16 16"><path d="M4 1h8l3 3v11H4z" fill="#fff" stroke="#000"/><rect x="1" y="3" width="10" height="9" fill="#0000A0"/><path d="M2.5 5l1.5 5 1.5-4 1.5 4 1.5-5" stroke="#fff" stroke-width="1" fill="none"/></svg>
<div class="a t" style="left:164px;top:747px;letter-spacing:-0.2px">Справка по SQL_BOSS -...</div>
<div class="a chk" style="left:302px;top:742px;width:160px;height:22px;box-shadow:inset 1px 1px #404040,inset -1px -1px #fff,inset 2px 2px #808080"></div>
<svg class="a" style="left:308px;top:746px" width="16" height="16" viewBox="0 0 16 16"><rect width="16" height="16" fill="#800048"/><rect x="2" y="2" width="12" height="12" fill="#fff"/><circle cx="10.3" cy="5.8" r="3" fill="#800048"/><path d="M9 7.5L4.8 11" stroke="#800048" stroke-width="3.2" stroke-linecap="round"/><path d="M4.6 11.2l4.8-3.8" stroke="#fff" stroke-width="0.9"/><circle cx="11" cy="4.6" r="0.8" fill="#fff"/></svg>
<div class="a t" style="left:327px;top:747px;font-weight:bold;letter-spacing:0.2px">SQL_BOSS [05.07.02] ...</div>
<div class="a" style="left:935px;top:746px;width:16px;height:16px;background:#0A246A"></div>
<div class="a t" style="left:936px;top:748px;color:#fff;font-size:11px">EN</div>
<div class="a" style="left:955px;top:742px;width:1px;height:22px;background:#808080"></div>
<div class="a" style="left:956px;top:742px;width:1px;height:22px;background:#fff"></div>
<div class="a" style="left:960px;top:742px;width:62px;height:24px;box-shadow:inset 1px 1px #808080,inset -1px -1px #fff"></div>
<svg class="a" style="left:964px;top:746px" width="16" height="16" viewBox="0 0 16 16"><path d="M1 9l7-8 7 7-7 7-7-1z" fill="#E8E020" stroke="#000" stroke-width="0.8"/><path d="M3 9l5-6M5 11l5-6M7 13l5-6" stroke="#fff" stroke-width="0.8"/><circle cx="8" cy="8" r="1" fill="#0000ff"/></svg>
<div class="a t" style="left:987px;top:748px;">13:44</div>
<div class="a" style="left:1021px;top:0px;width:3px;height:738px;background:#D4D0C8"></div>
<div class="a" style="left:1021px;top:2px;width:1px;height:13px;background:#404040"></div>
<div class="a" style="left:1022px;top:0px;width:2px;height:15px;background:#C8C8C8"></div>
<div class="a chk" style="left:1022px;top:15px;width:2px;height:602px;"></div>
<div class="a" style="left:1021px;top:96px;width:1px;height:21px;background:#404040"></div>
<div class="a" style="left:1021px;top:213px;width:1px;height:8px;background:#404040"></div>
<div class="a" style="left:1021px;top:589px;width:1px;height:16px;background:#404040"></div>
</div></body></html>
